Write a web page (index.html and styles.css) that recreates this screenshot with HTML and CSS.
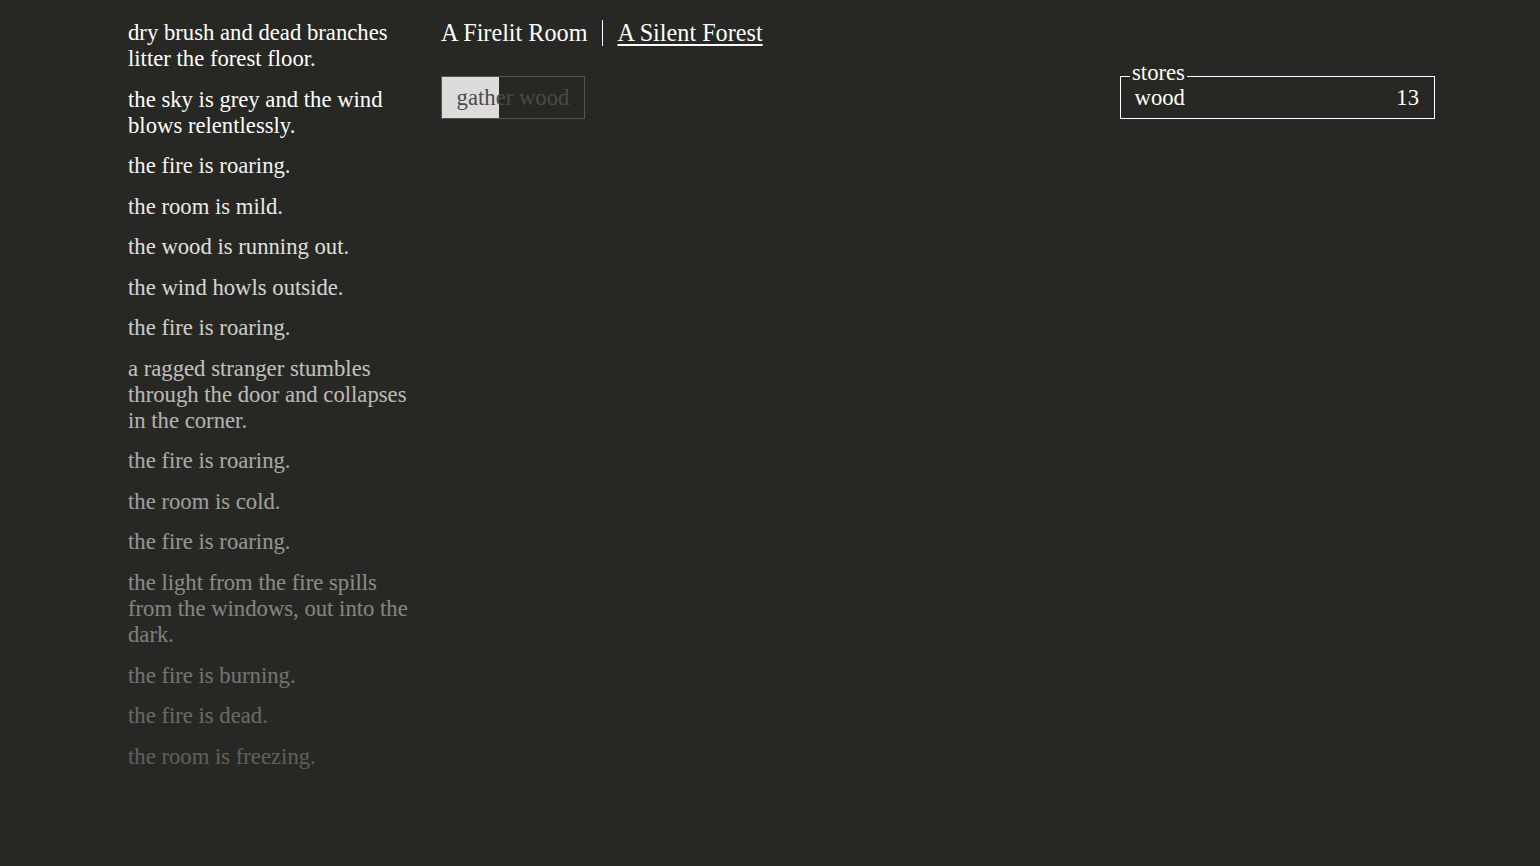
FILE: index.html
```html
<!DOCTYPE html>
<html lang="en">
<head>
  <meta charset="UTF-8" />
  <title>A Dark Room</title>
  <meta name="viewport" content="width=device-width, initial-scale=1.0"/>
  <link rel="stylesheet" href="styles.css">
</head>
<body>

  <div class="wrapper">

    <div class="notifications">
      <div class="notification">dry brush and dead branches litter the forest floor.</div>
      <div class="notification">the sky is grey and the wind blows relentlessly.</div>
      <div class="notification">the fire is roaring.</div>
      <div class="notification">the room is mild.</div>
      <div class="notification">the wood is running out.</div>
      <div class="notification">the wind howls outside.</div>
      <div class="notification">the fire is roaring.</div>
      <div class="notification">a ragged stranger stumbles through the door and collapses in the corner.</div>
      <div class="notification">the fire is roaring.</div>
      <div class="notification">the room is cold.</div>
      <div class="notification">the fire is roaring.</div>
      <div class="notification">the light from the fire spills from the windows, out into the dark.</div>
      <div class="notification">the fire is burning.</div>
      <div class="notification">the fire is dead.</div>
      <div class="notification">the room is freezing.</div>
      <div class="notify-gradient"></div>
    </div>

    <div class="main">
      <div class="header">
        <span class="header-button">A Firelit Room</span>
        <span class="header-sep"></span>
        <span class="header-button selected-link">A Silent Forest</span>
      </div>

      <div class="panel">
        <div class="buttons">
          <div class="button disabled">
            <div class="cooldown" style="width: 40%"></div>
            <span class="button-text">gather wood</span>
          </div>
        </div>

        <div class="stores">
          <div class="legend">stores</div>
          <div class="store-row">
            <span>wood</span>
            <span>13</span>
          </div>
        </div>
      </div>
    </div>

  </div>

</body>
</html>
```

FILE: styles.css
```css
body {
  font-family: "Liberation Serif", "Times New Roman", serif;
  background: #272823;
  color: white;
  margin: 0;
  min-height: 100vh;
  overflow: hidden;
}

.wrapper {
  display: flex;
  gap: 33px;
  padding-left: 128px;
}

.notifications {
  position: relative;
  width: 280px;
  height: 866px;
  padding-top: 20px;
  box-sizing: border-box;
  font-size: 22.7px;
}

.notification {
  margin-bottom: 14.55px;
}

.notify-gradient {
  position: absolute;
  top: 0;
  left: 0;
  width: 100%;
  height: 100%;
  background: linear-gradient(to bottom, rgba(39, 40, 35, 0) 120px, rgba(39, 40, 35, 0.87) 100%);
}

.main {
  width: 994px;
  padding-top: 18px;
}

.header {
  display: flex;
  align-items: center;
  font-size: 24.2px;
  height: 30px;
}

.header-sep {
  width: 1.5px;
  height: 26px;
  background: white;
  margin: 0 14px 0 14.5px;
}

.selected-link {
  text-decoration: underline;
  text-decoration-thickness: 2px;
  text-underline-offset: 3px;
}

.panel {
  display: flex;
  justify-content: space-between;
  margin-top: 28px;
  font-size: 22.7px;
}

.button {
  position: relative;
  width: 144px;
  height: 43px;
  border: 1px solid #55554f;
  box-sizing: border-box;
  text-align: center;
  line-height: 41px;
  color: #4a4a46;
}

.cooldown {
  position: absolute;
  top: 0;
  left: 0;
  height: 100%;
  background: #dcdcdc;
}

.button-text {
  position: relative;
}

.stores {
  position: relative;
  width: 315px;
  height: 43px;
  border: 1.5px solid white;
  box-sizing: border-box;
  padding: 0 15px 0 13.5px;
}

.legend {
  position: absolute;
  top: -17px;
  left: 9px;
  padding: 0 2px;
  background: #272823;
  line-height: 26px;
}

.store-row {
  display: flex;
  justify-content: space-between;
  line-height: 41px;
}
```
